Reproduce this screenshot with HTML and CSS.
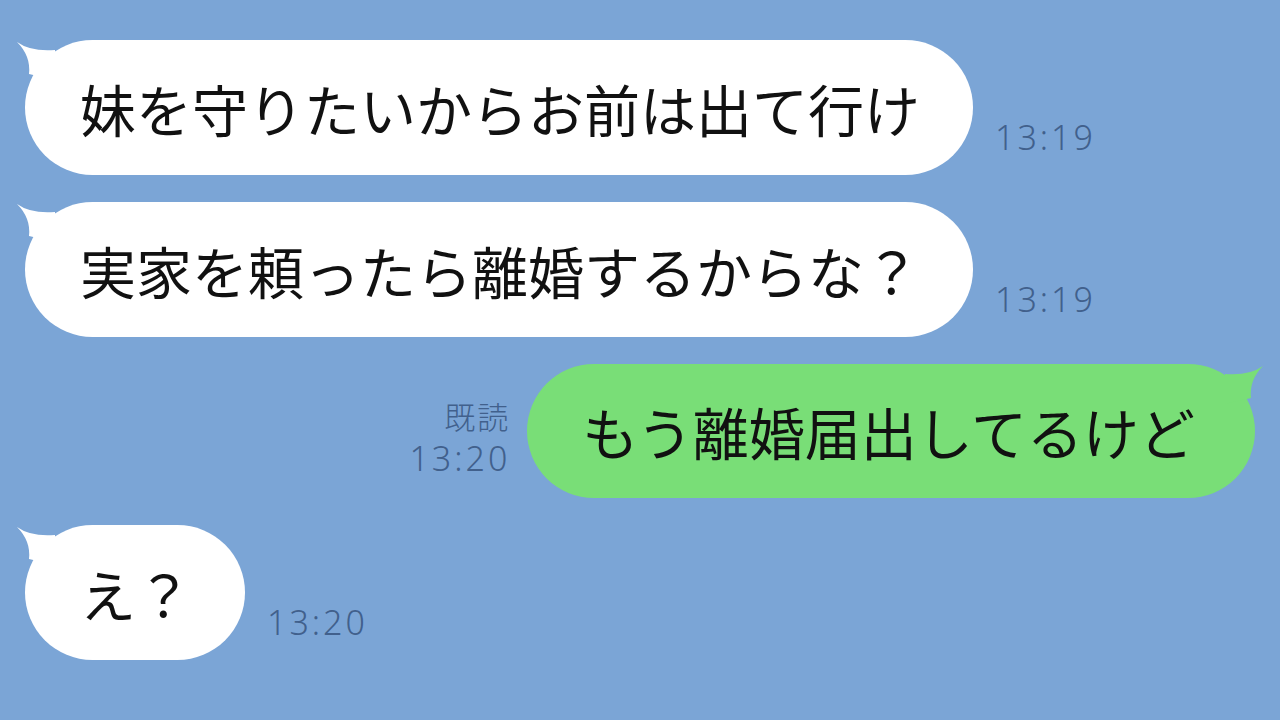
FILE: index.html
```html
<!DOCTYPE html>
<html lang="ja">
<head>
    <meta charset="UTF-8">
    <title>トーク</title>
    <link rel="stylesheet" href="styles.css">
</head>
<body>
    <div class="chat">
        <div class="row row-left">
            <div class="bubble bubble-in">
                <svg class="tail tail-in" width="44" height="40" viewBox="0 0 44 40"><path d="M2 2 Q16 12 40 10 L40 40 L14 34 Q16 16 2 2 Z"/></svg>
                妹を守りたいからお前は出て行け
            </div>
            <div class="meta"><span class="time">13:19</span></div>
        </div>

        <div class="row row-left">
            <div class="bubble bubble-in">
                <svg class="tail tail-in" width="44" height="40" viewBox="0 0 44 40"><path d="M2 2 Q16 12 40 10 L40 40 L14 34 Q16 16 2 2 Z"/></svg>
                実家を頼ったら離婚するからな？
            </div>
            <div class="meta"><span class="time">13:19</span></div>
        </div>

        <div class="row row-right">
            <div class="meta meta-out">
                <span class="read">既読</span>
                <span class="time">13:20</span>
            </div>
            <div class="bubble bubble-out">
                <svg class="tail tail-out" width="44" height="40" viewBox="0 0 44 40"><path d="M42 2 Q28 12 4 10 L4 40 L30 34 Q28 16 42 2 Z"/></svg>
                もう離婚届出してるけど
            </div>
        </div>

        <div class="row row-left">
            <div class="bubble bubble-in">
                <svg class="tail tail-in" width="44" height="40" viewBox="0 0 44 40"><path d="M2 2 Q16 12 40 10 L40 40 L14 34 Q16 16 2 2 Z"/></svg>
                え？
            </div>
            <div class="meta"><span class="time">13:20</span></div>
        </div>
    </div>
</body>
</html>
```

FILE: styles.css
```css
html, body {
    margin: 0;
    height: 100%;
}

body {
    background: #7ba5d6;
    font-family: "Noto Sans CJK JP", "Noto Sans", sans-serif;
    overflow: hidden;
}

.chat {
    display: flex;
    flex-direction: column;
    gap: 27px;
    padding: 40px 25px 0 25px;
}

.row {
    display: flex;
    align-items: flex-end;
}

.row-right {
    justify-content: flex-end;
}

.bubble {
    position: relative;
    font-size: 56px;
    line-height: 67px;
    color: #111;
    padding: 34px 53px 34px 55px;
    border-radius: 68px;
    white-space: nowrap;
}

.bubble-in {
    background: #ffffff;
}

.bubble-out {
    background: #79de77;
    padding: 33px 60px 34px 55px;
}

.tail {
    position: absolute;
    top: 0;
}

.tail-in {
    left: -10px;
    fill: #ffffff;
}

.tail-out {
    right: -10px;
    fill: #79de77;
}

.meta {
    display: flex;
    flex-direction: column;
    padding: 0 0 18px 22px;
    color: #41608c;
}

.meta-out {
    align-items: flex-end;
    padding: 0 17px 20px 0;
}

.time {
    font-family: "Noto Sans", "DejaVu Sans", sans-serif;
    font-size: 34px;
    font-weight: 300;
    line-height: 40px;
    letter-spacing: 3px;
}

.read {
    font-size: 31px;
    font-weight: 300;
    line-height: 44px;
    letter-spacing: 2px;
}
```
